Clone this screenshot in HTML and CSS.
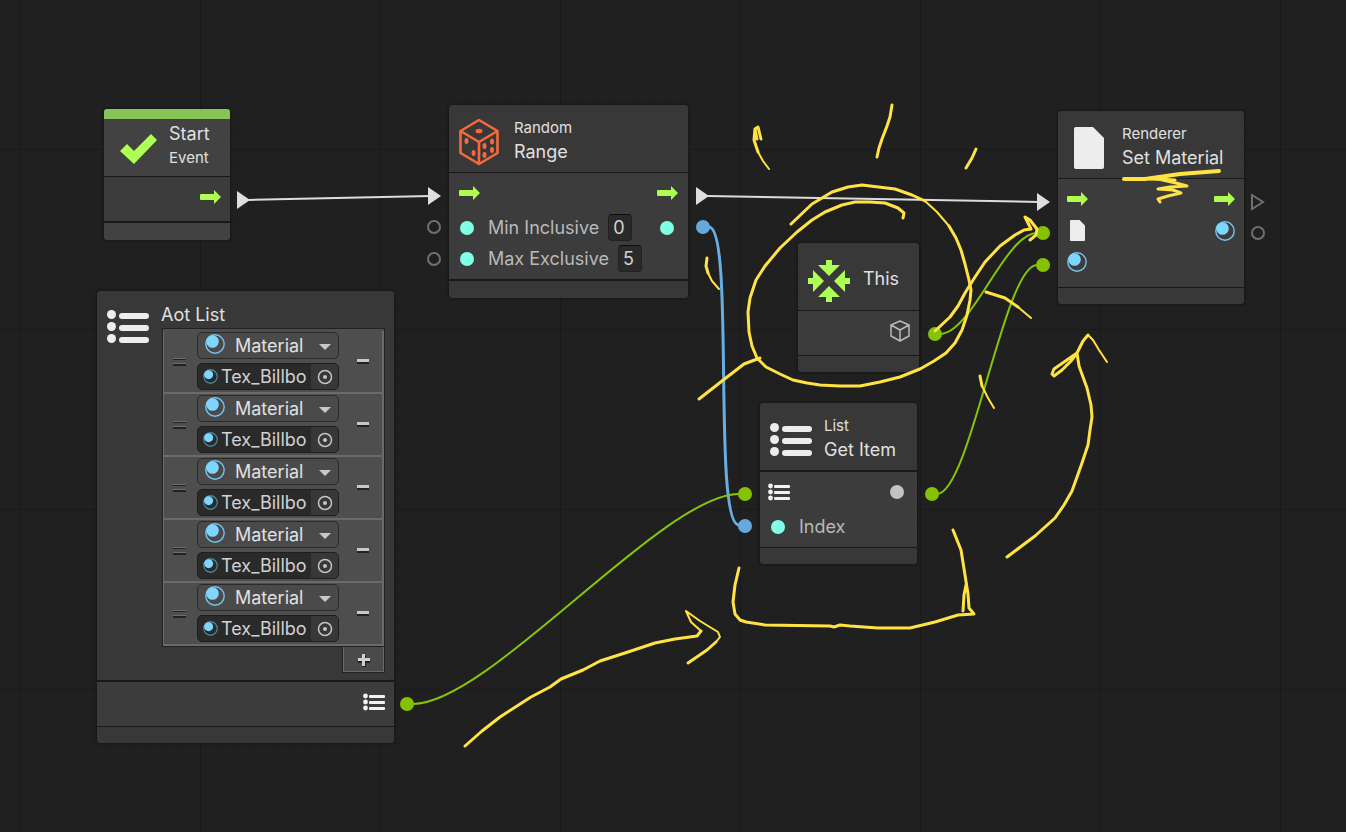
FILE: index.html
```html
<!DOCTYPE html>
<html lang="en">
<head>
<meta charset="utf-8">
<title>Script Graph</title>
<link rel="stylesheet" href="styles.css">
</head>
<body>
<svg class="defs" aria-hidden="true">
  <defs>
    <symbol id="flow" viewBox="0 0 21 14"><path fill="#b0fc50" d="M1 4h13V0l7 7-7 7v-4H1q-1 0-1-1V5q0-1 1-1z"/></symbol>
    <symbol id="list" viewBox="0 0 42 34"><g fill="#ededed"><circle cx="4.500" cy="4.500" r="4.500"/><circle cx="4.500" cy="16.500" r="4.500"/><circle cx="4.500" cy="28.500" r="4.500"/><rect x="12" y="3" width="30" height="6" rx="3"/><rect x="12" y="15" width="30" height="6" rx="3"/><rect x="12" y="27" width="30" height="6" rx="3"/></g></symbol>
    <symbol id="list-small" viewBox="0 0 22 18"><g fill="#f2f2f2"><circle cx="2.500" cy="3" r="2.400"/><circle cx="2.500" cy="9" r="2.400"/><circle cx="2.500" cy="15" r="2.400"/><rect x="6" y="2" width="16" height="3" rx="1"/><rect x="6" y="8" width="16" height="3" rx="1"/><rect x="6" y="14" width="16" height="3" rx="1"/></g></symbol>
    <symbol id="material" viewBox="0 0 20 20"><circle cx="10" cy="10" r="9.200" fill="none" stroke="#76c4ee" stroke-width="1.400"/><circle cx="7.500" cy="7.500" r="6.300" fill="#7fd6fd"/></symbol>
    <symbol id="material-dim" viewBox="0 0 20 20"><circle cx="10" cy="10" r="9" fill="none" stroke="#4c8399" stroke-width="1.700"/><circle cx="7.500" cy="7.500" r="6" fill="#7fd6fd"/></symbol>
    <symbol id="file" viewBox="0 0 30 42"><path fill="#ededed" d="M2 0h17l11 11v29q0 2-2 2H2q-2 0-2-2V2q0-2 2-2z"/></symbol>
    <symbol id="target" viewBox="0 0 16 16"><circle cx="8" cy="8" r="6.500" fill="none" stroke="#c4c4c4" stroke-width="1.500"/><circle cx="8" cy="8" r="2" fill="#c4c4c4"/></symbol>
  </defs>
</svg>

<main class="canvas">
  <svg class="layer wires" aria-hidden="true">
    <g class="wire wire-flow">
      <path d="M248 200L430 196"/>
      <path d="M708 196L1040 202"/>
    </g>
    <path class="wire wire-number" d="M709 227C735 227 712 525 739 525"/>
    <g class="wire wire-object">
      <path d="M413 704C489 704 663 494 739 494"/>
      <path d="M940 334C972 334 1005 233 1037 233"/>
      <path d="M937 494C970 494 1004 265 1037 265"/>
    </g>
    <g class="pin-flow">
      <path d="M237 191v18l13-9z"/><path d="M428 187v18l13-9z"/><path d="M696 187v18l13-9z"/><path d="M1037 193v18l13-9z"/>
    </g>
    <g class="pin-number"><circle cx="703" cy="227" r="7"/><circle cx="745" cy="526" r="7"/></g>
    <g class="pin-object">
      <circle cx="407" cy="704" r="7"/><circle cx="745" cy="494" r="7"/><circle cx="932" cy="494" r="7"/>
      <circle cx="935" cy="334" r="7"/><circle cx="1043" cy="233" r="7"/><circle cx="1043" cy="265" r="7"/>
    </g>
    <g class="pin-empty">
      <circle cx="434" cy="227" r="6"/><circle cx="434" cy="259" r="6"/><circle cx="1258" cy="233" r="6"/>
      <path d="M1252 195v14l11-7z"/>
    </g>
  </svg>

  <section class="node node-start">
    <div class="event-bar"></div>
    <header class="node-head">
      <svg class="node-icon" width="42" height="40" viewBox="0 0 42 40"><path fill="#adff55" d="M2 21l7-7 7 7L33 4l6 6-23 24z"/></svg>
      <div class="titles"><h2 class="title">Start</h2><p class="kind">Event</p></div>
    </header>
    <div class="ports">
      <div class="port-row first end"><svg width="21" height="14"><use href="#flow"/></svg></div>
    </div>
    <footer class="node-foot thick"></footer>
  </section>

  <section class="node node-random">
    <header class="node-head">
      <svg class="node-icon" width="42" height="48" viewBox="0 0 42 48">
        <g fill="none" stroke="#f8683c" stroke-width="2.600" stroke-linejoin="round"><path d="M21 2l18.500 11v22L21 46 2.500 35V13z"/><path d="M2.500 13L21 24l18.500-11M21 24v22"/></g>
        <g fill="#f8683c"><ellipse cx="21" cy="13" rx="3.500" ry="2.300"/><ellipse cx="8.500" cy="23" rx="2" ry="3"/><ellipse cx="15.500" cy="35" rx="2" ry="3"/><ellipse cx="26.500" cy="28" rx="2" ry="3"/><ellipse cx="34" cy="23.500" rx="2" ry="3"/><ellipse cx="26.500" cy="37" rx="2" ry="3"/><ellipse cx="34" cy="32" rx="2" ry="3"/></g>
      </svg>
      <div class="titles"><p class="kind">Random</p><h2 class="title">Range</h2></div>
    </header>
    <div class="ports">
      <div class="port-row first"><svg width="21" height="14"><use href="#flow"/></svg><svg class="out" width="21" height="14"><use href="#flow"/></svg></div>
      <div class="port-row"><span class="dot"></span><label for="min">Min Inclusive</label><input class="number" id="min" type="text" value="0"><span class="dot out"></span></div>
      <div class="port-row"><span class="dot"></span><label for="max">Max Exclusive</label><input class="number" id="max" type="text" value="5"></div>
    </div>
    <footer class="node-foot thick"></footer>
  </section>

  <section class="node node-renderer">
    <header class="node-head">
      <svg class="node-icon" width="42" height="42" viewBox="0 0 42 42"><use href="#file" x="6" width="30" height="42"/></svg>
      <div class="titles"><p class="kind">Renderer</p><h2 class="title">Set Material</h2></div>
    </header>
    <div class="ports">
      <div class="port-row first"><svg width="21" height="14"><use href="#flow"/></svg><svg class="out" width="21" height="14"><use href="#flow"/></svg></div>
      <div class="port-row"><svg width="21" height="21"><use href="#file"/></svg><svg class="out" width="20" height="20"><use href="#material"/></svg></div>
      <div class="port-row"><svg width="20" height="20"><use href="#material"/></svg></div>
    </div>
    <footer class="node-foot"></footer>
  </section>

  <section class="node node-this">
    <header class="node-head">
      <svg class="node-icon" width="42" height="42" viewBox="0 0 42 42"><g fill="#adff55"><path id="wedge" d="M18 0h6v5h8L21 16 10 5h8z"/><use href="#wedge" transform="rotate(90 21 21)"/><use href="#wedge" transform="rotate(180 21 21)"/><use href="#wedge" transform="rotate(270 21 21)"/></g></svg>
      <div class="titles"><h2 class="title">This</h2></div>
    </header>
    <div class="ports">
      <div class="port-row first end"><svg width="20" height="22" viewBox="0 0 20 22"><path fill="none" stroke="#b9b9b9" stroke-width="1.500" stroke-linejoin="round" d="M10 1l9 4v11l-9 5-9-5V5zM1 5l9 5 9-5M10 10v11"/></svg></div>
    </div>
    <footer class="node-foot"></footer>
  </section>

  <section class="node node-item">
    <header class="node-head">
      <svg class="node-icon" width="42" height="34"><use href="#list"/></svg>
      <div class="titles"><p class="kind">List</p><h2 class="title">Get Item</h2></div>
    </header>
    <div class="ports thick">
      <div class="port-row first"><svg width="22" height="18"><use href="#list-small"/></svg><span class="dot any out"></span></div>
      <div class="port-row"><span class="dot"></span><span>Index</span></div>
    </div>
    <footer class="node-foot"></footer>
  </section>

  <section class="node node-aot">
    <header class="aot-head">
      <svg class="node-icon" width="42" height="34"><use href="#list"/></svg>
      <div class="aot-main">
        <h2 class="title">Aot List</h2>
        <ul class="items">
          <li class="item"><span class="grip"></span><div class="fields"><div class="picker"><select aria-label="Type of item 1"><option>Material</option></select><svg width="20" height="20"><use href="#material"/></svg><span class="caret"></span></div><div class="object"><svg width="15" height="15"><use href="#material-dim"/></svg><input type="text" aria-label="Value of item 1" value="Tex_Billbo"><button type="button" aria-label="Select object"><svg width="16" height="16"><use href="#target"/></svg></button></div></div><button class="remove" type="button" aria-label="Remove item 1"></button></li>
          <li class="item"><span class="grip"></span><div class="fields"><div class="picker"><select aria-label="Type of item 2"><option>Material</option></select><svg width="20" height="20"><use href="#material"/></svg><span class="caret"></span></div><div class="object"><svg width="15" height="15"><use href="#material-dim"/></svg><input type="text" aria-label="Value of item 2" value="Tex_Billbo"><button type="button" aria-label="Select object"><svg width="16" height="16"><use href="#target"/></svg></button></div></div><button class="remove" type="button" aria-label="Remove item 2"></button></li>
          <li class="item"><span class="grip"></span><div class="fields"><div class="picker"><select aria-label="Type of item 3"><option>Material</option></select><svg width="20" height="20"><use href="#material"/></svg><span class="caret"></span></div><div class="object"><svg width="15" height="15"><use href="#material-dim"/></svg><input type="text" aria-label="Value of item 3" value="Tex_Billbo"><button type="button" aria-label="Select object"><svg width="16" height="16"><use href="#target"/></svg></button></div></div><button class="remove" type="button" aria-label="Remove item 3"></button></li>
          <li class="item"><span class="grip"></span><div class="fields"><div class="picker"><select aria-label="Type of item 4"><option>Material</option></select><svg width="20" height="20"><use href="#material"/></svg><span class="caret"></span></div><div class="object"><svg width="15" height="15"><use href="#material-dim"/></svg><input type="text" aria-label="Value of item 4" value="Tex_Billbo"><button type="button" aria-label="Select object"><svg width="16" height="16"><use href="#target"/></svg></button></div></div><button class="remove" type="button" aria-label="Remove item 4"></button></li>
          <li class="item"><span class="grip"></span><div class="fields"><div class="picker"><select aria-label="Type of item 5"><option>Material</option></select><svg width="20" height="20"><use href="#material"/></svg><span class="caret"></span></div><div class="object"><svg width="15" height="15"><use href="#material-dim"/></svg><input type="text" aria-label="Value of item 5" value="Tex_Billbo"><button type="button" aria-label="Select object"><svg width="16" height="16"><use href="#target"/></svg></button></div></div><button class="remove" type="button" aria-label="Remove item 5"></button></li>
        </ul>
        <button class="add" type="button" aria-label="Add item"><svg width="14" height="14" viewBox="0 0 14 14"><path fill="#222" d="M5 3h4v11H5zM1 7h12v3H1z"/><path fill="#d0d0d0" d="M5 1h3v12H5zM1 5h12v3H1z"/></svg></button>
      </div>
    </header>
    <div class="ports thick">
      <div class="port-row first end"><svg width="22" height="18"><use href="#list-small"/></svg></div>
    </div>
    <footer class="node-foot"></footer>
  </section>

  <svg class="layer ink" aria-hidden="true">
    <path d="M757 139L755 129 758 127 761 139M755 129L754 140 758 152"/>
    <path class="fine" d="M758 152L763 161 769 169"/>
    <path d="M892 105L890 117 887 126 882 139 879 148 877 157M976 149L972 158 966 168"/>
    <path d="M791 224L812 204 832 192 848 187 862 185 895 189 912 195 925 201M903 218L904 213 898 208 885 203 870 202 855 202 842 205 825 212 812 220 797 232 780 248 765 266 756 280 750 298 748 312 749 332 752 346 757 358 766 367 780 374 793 380 807 383 820 385 840 386 860 386 880 382 900 377 920 369 934 361 946 353 955 343 962 330 967 315 970 300 971 290 969 280 965 264 961 250 956 238 949 226"/>
    <path class="fine" d="M925 201L937 212 949 226"/>
    <path d="M699 399L722 381 744 364 760 358"/>
    <path d="M707 258L706 266 708 273M986 292L1005 298 1018 307M980 376L982 386"/>
    <path class="fine" d="M708 273L712 281 719 289M1018 307L1031 318M982 386L988 398 994 408"/>
    <path d="M935 331L950 317 958 306 965 293 975 277 985 262 1000 246 1015 235 1024 230 1031 229 1025 217 1030 220 1037 229 1036 235 1030 240"/>
    <path class="bold" d="M1124 179L1145 179 1180 174 1219 171"/>
    <path d="M1150 179L1175 180 1158 179 1176 183 1187 186 1170 187 1158 189 1173 190 1181 193 1168 196 1158 199 1160 202"/>
    <path d="M739 568L735 585 733 602 735 614 740 620 746 622 765 625 830 626 834 627 840 625 850 626 878 628 910 628 935 622 958 615 974 614 969 608 968 594 965 575 961 550 953 530M963 611L964 595 966 585"/>
    <path d="M1007 557L1015 551 1035 536 1055 518 1064 505 1072 491 1082 463 1088 445 1090 430 1092 417 1091 405 1087 388 1079 366 1077 353 1054 369 1052 374 1054 376 1062 370 1071 361 1077 353 1083 341 1088 335"/>
    <path class="fine" d="M1088 335L1093 340 1099 350 1107 362"/>
    <path d="M465 746L482 731 500 717 531 697 550 687 561 679 583 670 600 661 625 653 655 643 675 639 697 636 701 631"/>
    <path class="fine" d="M701 631L691 622 686 611 700 621 718 632 720 637 716 642"/>
    <path d="M716 642L707 650 688 663"/>
  </svg>
</main>
</body>
</html>
```
FILE: styles.css
```css
* { box-sizing: border-box; }

body {
  margin: 0;
  background: #202020;
  color: #e0e0e0;
  font-family: Inter, "Liberation Sans", sans-serif;
  font-size: 18px;
  font-optical-sizing: none;
}

h2, p, ul { margin: 0; padding: 0; }
button, input, select { font: inherit; font-optical-sizing: none; color: inherit; margin: 0; }
svg { display: block; flex: none; }
.defs { position: absolute; width: 0; height: 0; }

.canvas {
  position: relative;
  min-height: 100vh;
  overflow: hidden;
  background:
    repeating-linear-gradient(90deg, #191919 0 1px, transparent 1px 180px) 20px 0,
    repeating-linear-gradient(#191919 0 1px, transparent 1px 180px) 0 -31px,
    repeating-linear-gradient(90deg, #1e1e1e 0 1px, transparent 1px 18px) 2px 0,
    repeating-linear-gradient(#1e1e1e 0 1px, transparent 1px 18px) 0 5px,
    #202020;
  background-size: 180px 180px, 180px 180px, 18px 18px, 18px 18px, auto;
}

.layer {
  position: absolute;
  inset: 0;
  width: 100%;
  height: 100%;
  pointer-events: none;
}

/* Connections */
.wire { fill: none; stroke-width: 2; }
.wire-flow { stroke: #dcdcdc; }
.wire-number { stroke: #66aee4; stroke-width: 3; }
.wire-object { stroke: #86c40a; }
.pin-flow { fill: #dedede; }
.pin-number { fill: #66aadd; }
.pin-object { fill: #84c203; }
.pin-empty { fill: none; stroke: #707070; stroke-width: 2; }

/* Marker strokes */
.ink path {
  fill: none;
  stroke: #ffe345;
  stroke-width: 3;
  stroke-linecap: round;
  stroke-linejoin: round;
}
.ink .fine { stroke-width: 2; }
.ink .bold { stroke-width: 4; }

/* Nodes */
.node {
  position: absolute;
  background: #383838;
  border-radius: 3px;
  box-shadow: 0 0 0 1px #191919, 0 0 3px #111;
}
.node-start { left: 104px; top: 109px; width: 126px; background: #424242; }
.node-random { left: 449px; top: 105px; width: 239px; }
.node-renderer { left: 1058px; top: 111px; width: 186px; }
.node-this { left: 798px; top: 243px; width: 121px; }
.node-item { left: 760px; top: 403px; width: 157px; }
.node-aot { left: 97px; top: 291px; width: 297px; }

.event-bar { height: 10px; background: #86c456; border-radius: 3px 3px 0 0; }

.node-head {
  display: flex;
  align-items: center;
  gap: 12px;
  min-height: 67px;
  padding: 2px 10px 0;
}
.node-head .node-icon { margin-top: 4px; }
.node-start .node-head { min-height: 57px; padding: 0 14px; gap: 9px; }
.node-start .titles { padding-bottom: 4px; }
.node-random .node-head { gap: 14px; }
.node-random .node-icon { margin-left: -1px; }
.node-this .node-head { padding-top: 4px; gap: 13px; }

.title { font-size: 18px; line-height: 24px; font-weight: 400; white-space: nowrap; }
.kind { font-size: 15px; line-height: 24px; white-space: nowrap; }

.ports {
  padding: 0 10px 5px;
  background: #3c3c3c;
  border-top: 1px solid #191919;
  color: #b9b9b9;
}
.ports.thick { border-top-width: 2px; }
.port-row { display: flex; align-items: center; height: 31px; }
.port-row.first { height: 39px; }
.port-row.end { justify-content: flex-end; }
.out { margin-left: auto; }
.dot {
  width: 14px;
  height: 14px;
  margin: 0 14px 0 1px;
  border-radius: 50%;
  background: #80ffe6;
}
.dot.out { margin: 0 14px 0 auto; }
.dot.any { background: #c3c3c3; margin-right: 13px; }
.node-random .ports, .node-item .ports { padding-right: 0; }
.node-random svg.out { margin-right: 10px; }
.node-start .ports, .node-this .ports, .node-aot .ports { padding-right: 9px; }
.node-renderer .ports { padding: 0 9px 7px; }
.node-renderer .port-row:not(.first) { padding-bottom: 6px; }
.node-item .first svg { margin-left: -2px; }

.number {
  width: 24px;
  height: 27px;
  margin-left: 9px;
  padding: 0 0 0 4px;
  background: #2a2a2a;
  border: 1px solid #212121;
  border-top-color: #0d0d0d;
  border-radius: 4px;
  color: #d2d2d2;
}

.node-foot { height: 17px; border-top: 1px solid #191919; border-radius: 0 0 3px 3px; }
.node-foot.thick { height: 19px; border-top-width: 2px; }

/* List literal */
.aot-head { display: flex; gap: 12px; padding: 12px 9px 7px 10px; }
.aot-head .node-icon { margin-top: 7px; }
.aot-main { flex: 1; display: flex; flex-direction: column; }
.items {
  list-style: none;
  margin: 1px 0 0 1px;
  padding-top: 2px;
  background: #4e4e4e;
  border: 1px solid #222;
}
.item {
  display: flex;
  align-items: center;
  height: 63px;
  padding: 0 13px 0 9px;
  border: solid #6a6a6a;
  border-width: 0 2px 2px 1px;
}
.grip {
  width: 13px;
  height: 8px;
  margin: 0 11px 0 0;
  background: linear-gradient(#6e6e6e 0 1px, #222 1px 2px, transparent 2px 5px, #6e6e6e 5px 6px, #222 6px 8px);
}
.fields { display: grid; gap: 4px; width: 142px; padding-bottom: 1px; }
.picker { display: grid; align-items: center; }
.picker > * { grid-area: 1 / 1; pointer-events: none; }
.picker > svg { margin: 0 0 3px 8px; }
.picker select {
  appearance: none;
  pointer-events: auto;
  height: 27px;
  padding: 0 0 0 37px;
  background: #4a4a4a;
  border: 1px solid #2a2a2a;
  border-radius: 5px;
  color: #e0e0e0;
}
.caret {
  justify-self: end;
  margin: 2px 8px 0 0;
  border: solid transparent;
  border-width: 6px 6px 0;
  border-top-color: #c8c8c8;
}
.object {
  display: flex;
  align-items: center;
  height: 27px;
  padding-left: 5px;
  gap: 3px;
  background: #2a2a2a;
  border: 1px solid #1e1e1e;
  border-radius: 5px;
  overflow: hidden;
}
.object input {
  flex: 1;
  min-width: 0;
  height: 25px;
  padding: 0;
  background: none;
  border: 0;
  color: #d2d2d2;
}
.object button {
  display: grid;
  place-items: center;
  width: 27px;
  height: 25px;
  margin-left: -3px;
  padding: 0;
  background: #383838;
  border: 0;
}
.remove {
  width: 12px;
  height: 5px;
  margin-left: auto;
  padding: 0;
  border: 0;
  background: linear-gradient(#c8c8c8 0 3px, #222 3px 5px);
}
.add {
  align-self: flex-end;
  display: grid;
  place-items: center;
  width: 43px;
  height: 27px;
  margin-top: -1px;
  padding: 0;
  background: #4a4a4a;
  border: 1px solid #222;
  box-shadow: inset 1px -1px 0 #6a6a6a, inset -1px 0 0 #6a6a6a;
}
```
